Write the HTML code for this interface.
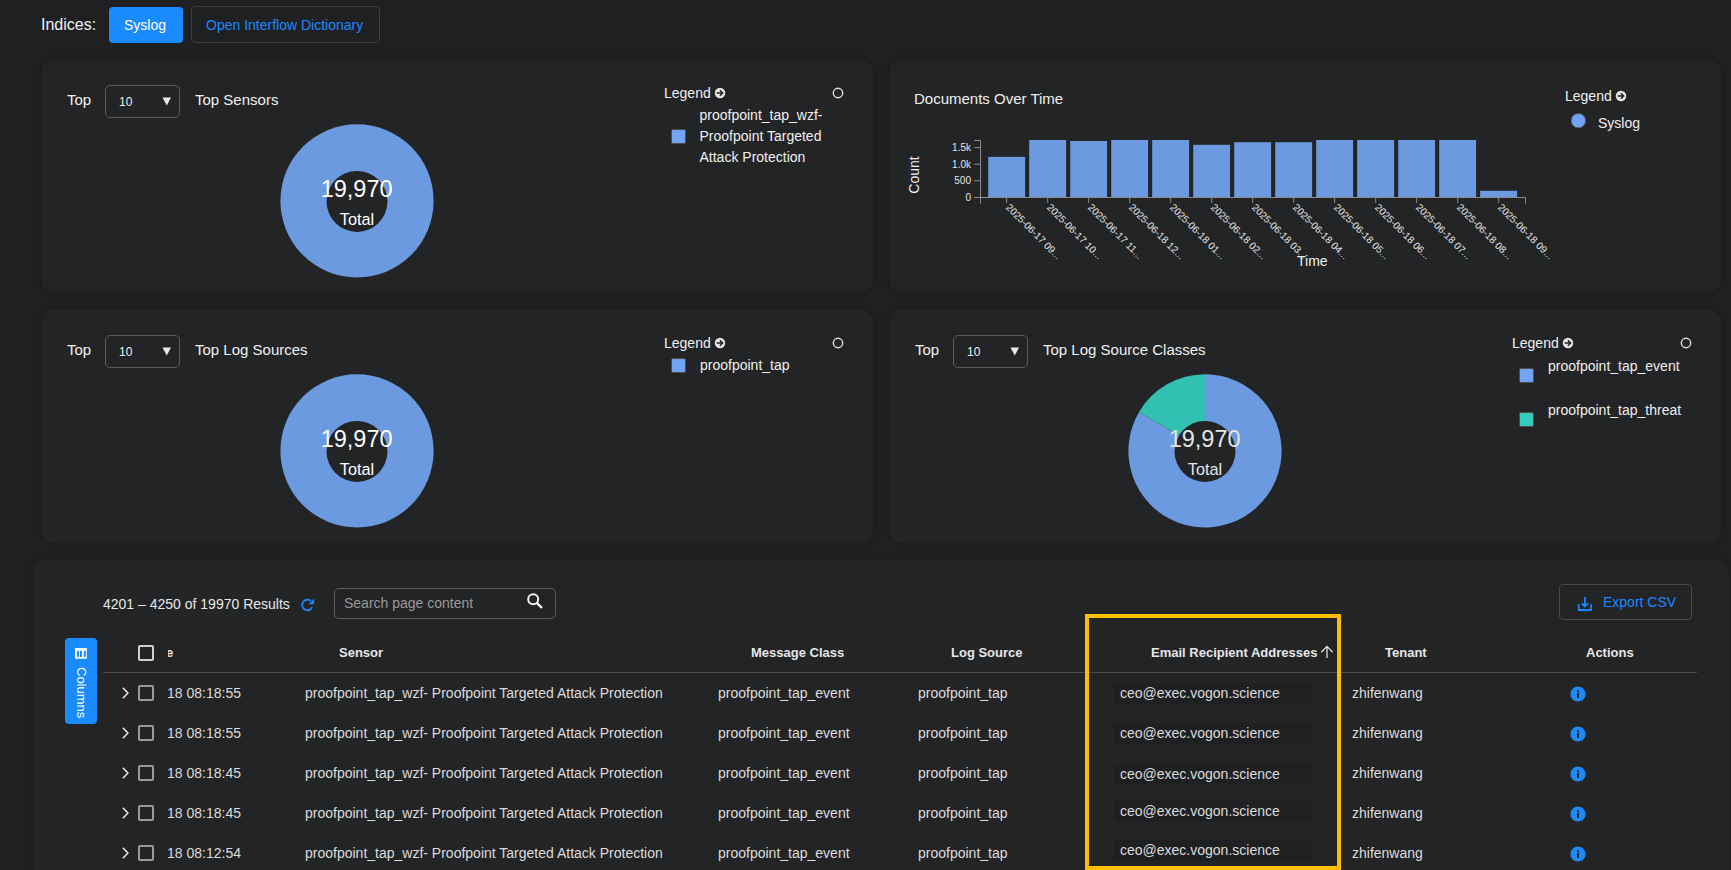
<!DOCTYPE html>
<html><head><meta charset="utf-8"><style>
html,body{margin:0;padding:0;}
body{width:1731px;height:870px;overflow:hidden;background:#1f2022;position:relative;font-family:"Liberation Sans", sans-serif;}
.t{position:absolute;white-space:nowrap;line-height:1;font-family:"Liberation Sans", sans-serif;}
svg text{font-family:"Liberation Sans",sans-serif;}
</style></head><body>
<div class="t" style="left:41px;top:17px;font-size:16px;color:#f0f0f0;">Indices:</div>
<div style="position:absolute;left:109px;top:7px;width:74px;height:36px;background:#1a8aff;border-radius:4px;"></div>
<div class="t" style="left:124px;top:18px;font-size:14px;color:#ffffff;">Syslog</div>
<div style="position:absolute;left:191px;top:6px;width:187px;height:35px;border:1px solid #3d3e41;border-radius:4px;"></div>
<div class="t" style="left:206px;top:18px;font-size:14px;color:#1a8aff;">Open Interflow Dictionary</div>
<div style="position:absolute;left:41px;top:59px;width:832px;height:234px;background:#232426;border-radius:14px;box-shadow:0 0 5px rgba(0,0,0,0.15);"></div>
<div style="position:absolute;left:889px;top:59px;width:832px;height:234px;background:#232426;border-radius:14px;box-shadow:0 0 5px rgba(0,0,0,0.15);"></div>
<div style="position:absolute;left:41px;top:309px;width:832px;height:234px;background:#232426;border-radius:14px;box-shadow:0 0 5px rgba(0,0,0,0.15);"></div>
<div style="position:absolute;left:889px;top:309px;width:832px;height:234px;background:#232426;border-radius:14px;box-shadow:0 0 5px rgba(0,0,0,0.15);"></div>
<div style="position:absolute;left:33px;top:559px;width:1696px;height:400px;background:#232426;border-radius:14px;box-shadow:0 0 5px rgba(0,0,0,0.15);"></div>
<div class="t" style="left:67px;top:92px;font-size:15px;color:#f0f0f0;">Top</div>
<div style="position:absolute;left:105px;top:85px;width:73px;height:31px;border:1px solid #5a5b5d;border-radius:5px;"></div>
<div class="t" style="left:119px;top:96px;font-size:12px;color:#f0f0f0;">10</div>
<svg style="position:absolute;left:162px;top:97px" width="10" height="10"><path d="M0.5 0.5 L9 0.5 L4.75 8.5 Z" fill="#e8e8e8"/></svg>
<div class="t" style="left:195px;top:92px;font-size:15px;color:#f0f0f0;">Top Sensors</div>
<svg style="position:absolute;left:277px;top:121px" width="160" height="160" viewBox="-80 -80 160 160"><circle cx="0" cy="-0.1" r="76.6" fill="#6b9ae1"/><circle cx="0" cy="0.4" r="30.5" fill="#232426"/></svg>
<div class="t" style="left:320.7px;top:178px;font-size:23.5px;color:#ffffff;width:70px;text-align:center;">19,970</div>
<div class="t" style="left:332px;top:211px;font-size:16.3px;color:#ffffff;width:50px;text-align:center;">Total</div>
<div class="t" style="left:664px;top:86px;font-size:14px;color:#f0f0f0;">Legend</div>
<svg style="position:absolute;left:713.8px;top:87.1px" width="12" height="12" viewBox="0 0 12 12"><circle cx="6" cy="6" r="5.25" fill="#e6e6e6"/><path d="M2.6 6 H8.6 M5.9 3.2 L8.7 6 L5.9 8.8" stroke="#232426" stroke-width="1.5" fill="none"/></svg>
<svg style="position:absolute;left:832px;top:87.1px" width="12" height="12" viewBox="0 0 12 12"><circle cx="6" cy="6" r="4.7" stroke="#e0e0e0" stroke-width="1.4" fill="none"/></svg>
<div style="position:absolute;left:671px;top:129px;width:13px;height:13px;background:#72a4f6;border:1px solid #4d4c48;border-radius:2px;"></div>
<div class="t" style="left:699.5px;top:104.5px;font-size:14px;line-height:21px;color:#f0f0f0;white-space:normal;width:135px">proofpoint_tap_wzf- Proofpoint Targeted Attack Protection</div>
<div class="t" style="left:67px;top:342px;font-size:15px;color:#f0f0f0;">Top</div>
<div style="position:absolute;left:105px;top:335px;width:73px;height:31px;border:1px solid #5a5b5d;border-radius:5px;"></div>
<div class="t" style="left:119px;top:346px;font-size:12px;color:#f0f0f0;">10</div>
<svg style="position:absolute;left:162px;top:347px" width="10" height="10"><path d="M0.5 0.5 L9 0.5 L4.75 8.5 Z" fill="#e8e8e8"/></svg>
<div class="t" style="left:195px;top:342px;font-size:15px;color:#f0f0f0;">Top Log Sources</div>
<svg style="position:absolute;left:277px;top:371px" width="160" height="160" viewBox="-80 -80 160 160"><circle cx="0" cy="-0.1" r="76.6" fill="#6b9ae1"/><circle cx="0" cy="0.4" r="30.5" fill="#232426"/></svg>
<div class="t" style="left:320.7px;top:428px;font-size:23.5px;color:#ffffff;width:70px;text-align:center;">19,970</div>
<div class="t" style="left:332px;top:461px;font-size:16.3px;color:#ffffff;width:50px;text-align:center;">Total</div>
<div class="t" style="left:664px;top:336px;font-size:14px;color:#f0f0f0;">Legend</div>
<svg style="position:absolute;left:713.8px;top:337.1px" width="12" height="12" viewBox="0 0 12 12"><circle cx="6" cy="6" r="5.25" fill="#e6e6e6"/><path d="M2.6 6 H8.6 M5.9 3.2 L8.7 6 L5.9 8.8" stroke="#232426" stroke-width="1.5" fill="none"/></svg>
<svg style="position:absolute;left:832px;top:337.1px" width="12" height="12" viewBox="0 0 12 12"><circle cx="6" cy="6" r="4.7" stroke="#e0e0e0" stroke-width="1.4" fill="none"/></svg>
<div style="position:absolute;left:671px;top:358px;width:13px;height:13px;background:#72a4f6;border:1px solid #4d4c48;border-radius:2px;"></div>
<div class="t" style="left:700px;top:358px;font-size:14px;color:#f0f0f0;">proofpoint_tap</div>
<div class="t" style="left:915px;top:342px;font-size:15px;color:#f0f0f0;">Top</div>
<div style="position:absolute;left:953px;top:335px;width:73px;height:31px;border:1px solid #5a5b5d;border-radius:5px;"></div>
<div class="t" style="left:967px;top:346px;font-size:12px;color:#f0f0f0;">10</div>
<svg style="position:absolute;left:1010px;top:347px" width="10" height="10"><path d="M0.5 0.5 L9 0.5 L4.75 8.5 Z" fill="#e8e8e8"/></svg>
<div class="t" style="left:1043px;top:342px;font-size:15px;color:#f0f0f0;">Top Log Source Classes</div>
<svg style="position:absolute;left:1125px;top:371px" width="160" height="160" viewBox="-80 -80 160 160"><path d="M0 -0.1 L0.00 -76.70 A76.6 76.6 0 1 1 -65.93 -39.09 Z" fill="#6b9ae1"/><path d="M0 -0.1 L-65.93 -39.09 A76.6 76.6 0 0 1 -0.00 -76.70 Z" fill="#31c0b1"/><circle cx="0" cy="0.4" r="30.5" fill="#232426"/></svg>
<div class="t" style="left:1168.7px;top:428px;font-size:23.5px;color:#e4e4e4;width:70px;text-align:center;">19,970</div>
<div class="t" style="left:1180px;top:461px;font-size:16.3px;color:#e4e4e4;width:50px;text-align:center;">Total</div>
<div class="t" style="left:1512px;top:336px;font-size:14px;color:#f0f0f0;">Legend</div>
<svg style="position:absolute;left:1561.8px;top:337.1px" width="12" height="12" viewBox="0 0 12 12"><circle cx="6" cy="6" r="5.25" fill="#e6e6e6"/><path d="M2.6 6 H8.6 M5.9 3.2 L8.7 6 L5.9 8.8" stroke="#232426" stroke-width="1.5" fill="none"/></svg>
<svg style="position:absolute;left:1680px;top:337.1px" width="12" height="12" viewBox="0 0 12 12"><circle cx="6" cy="6" r="4.7" stroke="#e0e0e0" stroke-width="1.4" fill="none"/></svg>
<div style="position:absolute;left:1519px;top:368px;width:13px;height:13px;background:#72a4f6;border:1px solid #4d4c48;border-radius:2px;"></div>
<div class="t" style="left:1548px;top:359px;font-size:14px;color:#f0f0f0;">proofpoint_tap_event</div>
<div style="position:absolute;left:1519px;top:412px;width:13px;height:13px;background:#33cdbd;border:1px solid #4d4c48;border-radius:2px;"></div>
<div class="t" style="left:1548px;top:403px;font-size:14px;color:#f0f0f0;">proofpoint_tap_threat</div>
<div class="t" style="left:914px;top:91px;font-size:15px;color:#f0f0f0;">Documents Over Time</div>
<div class="t" style="left:1565px;top:89px;font-size:14px;color:#f0f0f0;">Legend</div>
<svg style="position:absolute;left:1614.8px;top:90.1px" width="12" height="12" viewBox="0 0 12 12"><circle cx="6" cy="6" r="5.25" fill="#e6e6e6"/><path d="M2.6 6 H8.6 M5.9 3.2 L8.7 6 L5.9 8.8" stroke="#232426" stroke-width="1.5" fill="none"/></svg>
<svg style="position:absolute;left:1570px;top:113px" width="16" height="16"><circle cx="8.4" cy="7.7" r="7.2" fill="#72a4f6" stroke="#55565a" stroke-width="1"/></svg>
<div class="t" style="left:1598px;top:116px;font-size:14px;color:#f0f0f0;">Syslog</div>
<svg style="position:absolute;left:0;top:0" width="1731" height="300"><rect x="988.2" y="156.9" width="36.9" height="40.6" fill="#6b9ae1"/><rect x="1029.2" y="140" width="36.9" height="57.5" fill="#6b9ae1"/><rect x="1070.2" y="141" width="36.9" height="56.5" fill="#6b9ae1"/><rect x="1111.2" y="140" width="36.9" height="57.5" fill="#6b9ae1"/><rect x="1152.2" y="140" width="36.9" height="57.5" fill="#6b9ae1"/><rect x="1193.2" y="144.8" width="36.9" height="52.7" fill="#6b9ae1"/><rect x="1234.2" y="142.2" width="36.9" height="55.3" fill="#6b9ae1"/><rect x="1275.2" y="142.2" width="36.9" height="55.3" fill="#6b9ae1"/><rect x="1316.2" y="140" width="36.9" height="57.5" fill="#6b9ae1"/><rect x="1357.2" y="140" width="36.9" height="57.5" fill="#6b9ae1"/><rect x="1398.2" y="140" width="36.9" height="57.5" fill="#6b9ae1"/><rect x="1439.2" y="140" width="36.9" height="57.5" fill="#6b9ae1"/><rect x="1480.2" y="190.8" width="36.9" height="6.7" fill="#6b9ae1"/><path d="M974 140.5 H980.5 V197.5 H974 M980.5 203.5 V197.5 H1525.5 V203.5" stroke="#8c8c8c" stroke-width="1" fill="none"/><path d="M974 180.8 H980" stroke="#8c8c8c" stroke-width="1"/><path d="M974 164.2 H980" stroke="#8c8c8c" stroke-width="1"/><path d="M974 147.6 H980" stroke="#8c8c8c" stroke-width="1"/><text x="971" y="201.0" font-size="10" fill="#e6e6e6" text-anchor="end" font-family='"Liberation Sans"'>0</text><text x="971" y="184.3" font-size="10" fill="#e6e6e6" text-anchor="end" font-family='"Liberation Sans"'>500</text><text x="971" y="167.7" font-size="10" fill="#e6e6e6" text-anchor="end" font-family='"Liberation Sans"'>1.0k</text><text x="971" y="151.1" font-size="10" fill="#e6e6e6" text-anchor="end" font-family='"Liberation Sans"'>1.5k</text><path d="M1006.7 197.5 V203" stroke="#8c8c8c"/><text transform="translate(1006.7,203) rotate(45)" x="2.5" y="4.6" font-size="10" fill="#e6e6e6" font-family='"Liberation Sans"'>2025-06-17 09...</text><path d="M1047.7 197.5 V203" stroke="#8c8c8c"/><text transform="translate(1047.7,203) rotate(45)" x="2.5" y="4.6" font-size="10" fill="#e6e6e6" font-family='"Liberation Sans"'>2025-06-17 10...</text><path d="M1088.7 197.5 V203" stroke="#8c8c8c"/><text transform="translate(1088.7,203) rotate(45)" x="2.5" y="4.6" font-size="10" fill="#e6e6e6" font-family='"Liberation Sans"'>2025-06-17 11...</text><path d="M1129.7 197.5 V203" stroke="#8c8c8c"/><text transform="translate(1129.7,203) rotate(45)" x="2.5" y="4.6" font-size="10" fill="#e6e6e6" font-family='"Liberation Sans"'>2025-06-18 12...</text><path d="M1170.7 197.5 V203" stroke="#8c8c8c"/><text transform="translate(1170.7,203) rotate(45)" x="2.5" y="4.6" font-size="10" fill="#e6e6e6" font-family='"Liberation Sans"'>2025-06-18 01...</text><path d="M1211.7 197.5 V203" stroke="#8c8c8c"/><text transform="translate(1211.7,203) rotate(45)" x="2.5" y="4.6" font-size="10" fill="#e6e6e6" font-family='"Liberation Sans"'>2025-06-18 02...</text><path d="M1252.7 197.5 V203" stroke="#8c8c8c"/><text transform="translate(1252.7,203) rotate(45)" x="2.5" y="4.6" font-size="10" fill="#e6e6e6" font-family='"Liberation Sans"'>2025-06-18 03...</text><path d="M1293.7 197.5 V203" stroke="#8c8c8c"/><text transform="translate(1293.7,203) rotate(45)" x="2.5" y="4.6" font-size="10" fill="#e6e6e6" font-family='"Liberation Sans"'>2025-06-18 04...</text><path d="M1334.7 197.5 V203" stroke="#8c8c8c"/><text transform="translate(1334.7,203) rotate(45)" x="2.5" y="4.6" font-size="10" fill="#e6e6e6" font-family='"Liberation Sans"'>2025-06-18 05...</text><path d="M1375.7 197.5 V203" stroke="#8c8c8c"/><text transform="translate(1375.7,203) rotate(45)" x="2.5" y="4.6" font-size="10" fill="#e6e6e6" font-family='"Liberation Sans"'>2025-06-18 06...</text><path d="M1416.7 197.5 V203" stroke="#8c8c8c"/><text transform="translate(1416.7,203) rotate(45)" x="2.5" y="4.6" font-size="10" fill="#e6e6e6" font-family='"Liberation Sans"'>2025-06-18 07...</text><path d="M1457.7 197.5 V203" stroke="#8c8c8c"/><text transform="translate(1457.7,203) rotate(45)" x="2.5" y="4.6" font-size="10" fill="#e6e6e6" font-family='"Liberation Sans"'>2025-06-18 08...</text><path d="M1498.7 197.5 V203" stroke="#8c8c8c"/><text transform="translate(1498.7,203) rotate(45)" x="2.5" y="4.6" font-size="10" fill="#e6e6e6" font-family='"Liberation Sans"'>2025-06-18 09...</text><text transform="translate(919,175) rotate(-90)" x="0" y="0" font-size="14" fill="#f0f0f0" text-anchor="middle" font-family='"Liberation Sans"'>Count</text><text x="1297" y="266" font-size="14" fill="#f0f0f0" font-family='"Liberation Sans"'>Time</text></svg>
<div class="t" style="left:103px;top:597px;font-size:14px;color:#e8e8e8;">4201 – 4250 of 19970 Results</div>
<svg style="position:absolute;left:300px;top:598px" width="16" height="15" viewBox="0 0 16 15"><path d="M12.3 9.24 A5.3 5.3 0 1 1 10.9 2.94" stroke="#1a8aff" stroke-width="1.8" fill="none"/><path d="M14.1 0.8 L14.1 5.9 L8.2 6.6 Z" fill="#1a8aff"/></svg>
<div style="position:absolute;left:334px;top:588px;width:220px;height:29px;border:1px solid #5a5b5d;border-radius:5px;"></div>
<div class="t" style="left:344px;top:596px;font-size:14px;color:#9a9a9a;">Search page content</div>
<svg style="position:absolute;left:526px;top:592px" width="18" height="18" viewBox="0 0 18 18"><circle cx="7.2" cy="7.2" r="5" stroke="#f0f0f0" stroke-width="2" fill="none"/><path d="M10.8 10.8 L16 16" stroke="#f0f0f0" stroke-width="2.4"/></svg>
<div style="position:absolute;left:1559px;top:584px;width:131px;height:34px;border:1px solid #48494c;border-radius:4px;"></div>
<svg style="position:absolute;left:1577px;top:596px" width="16" height="16" viewBox="0 0 16 16"><path d="M1.7 8.2 V14 H14 V8.2" stroke="#1a8aff" stroke-width="1.8" fill="none"/><path d="M7.85 0.9 V10.6 M4.6 7.4 L7.85 10.6 L11.1 7.4" stroke="#1a8aff" stroke-width="1.8" fill="none"/></svg>
<div class="t" style="left:1603px;top:595px;font-size:14px;color:#1a8aff;">Export CSV</div>
<div style="position:absolute;left:65px;top:638px;width:32px;height:86px;background:#1a8aff;border-radius:4px;"></div>
<svg style="position:absolute;left:75px;top:648px" width="12" height="11" viewBox="0 0 12 11"><rect x="0" y="0" width="11.8" height="10.8" fill="#fff"/><rect x="1.9" y="2.9" width="2" height="6" fill="#1a8aff"/><rect x="5" y="2.9" width="2" height="6" fill="#1a8aff"/><rect x="8.8" y="2.9" width="2" height="6" fill="#1a8aff"/></svg>
<div class="t" style="left:68px;top:668px;width:26px;height:50px;"><div style="position:absolute;left:0;top:0;font-size:13px;color:#fff;transform-origin:0 0;transform:translate(20px,-1px) rotate(90deg);">Columns</div></div>
<div style="position:absolute;left:138px;top:645px;width:12px;height:12px;border:2px solid #d0d0d0;border-radius:2px;"></div>
<div style="position:absolute;left:167.5px;top:640px;width:10px;height:22px;overflow:hidden"><div class="t" style="left:-1.5px;top:6px;font-size:13px;color:#e6e6e6;font-weight:bold">e</div></div>
<div class="t" style="left:339px;top:646px;font-size:13px;color:#e6e6e6;font-weight:bold;">Sensor</div>
<div class="t" style="left:751px;top:646px;font-size:13px;color:#e6e6e6;font-weight:bold;">Message Class</div>
<div class="t" style="left:951px;top:646px;font-size:13px;color:#e6e6e6;font-weight:bold;">Log Source</div>
<div class="t" style="left:1151px;top:646px;font-size:13px;color:#e6e6e6;font-weight:bold;">Email Recipient Addresses</div>
<svg style="position:absolute;left:1320px;top:645px" width="14" height="14" viewBox="0 0 14 14"><path d="M7 13.1 V1.4 M1.3 7.2 L7 1.4 L12.7 7.2" stroke="#e6e6e6" stroke-width="1.25" fill="none"/></svg>
<div class="t" style="left:1385px;top:646px;font-size:13px;color:#e6e6e6;font-weight:bold;">Tenant</div>
<div class="t" style="left:1586px;top:646px;font-size:13px;color:#e6e6e6;font-weight:bold;">Actions</div>
<div style="position:absolute;left:103px;top:672px;width:1594px;height:1px;background:#4a4b4e;"></div>
<svg style="position:absolute;left:120px;top:687px" width="10" height="12" viewBox="0 0 10 12"><path d="M2.9 0.7 L7.9 6 L2.9 11.3" stroke="#e0e0e0" stroke-width="1.6" fill="none"/></svg>
<div style="position:absolute;left:138px;top:685px;width:12px;height:12px;border:2px solid #9a9a9a;border-radius:2px;"></div>
<div class="t" style="left:167px;top:686px;font-size:14px;color:#dcdcdc;">18 08:18:55</div>
<div class="t" style="left:305px;top:686px;font-size:14px;color:#dcdcdc;">proofpoint_tap_wzf- Proofpoint Targeted Attack Protection</div>
<div class="t" style="left:718px;top:686px;font-size:14px;color:#dcdcdc;">proofpoint_tap_event</div>
<div class="t" style="left:918px;top:686px;font-size:14px;color:#dcdcdc;">proofpoint_tap</div>
<div style="position:absolute;left:1114px;top:683px;width:197px;height:21px;background:#1f2022;"></div>
<div class="t" style="left:1120px;top:686px;font-size:14px;color:#dcdcdc;">ceo@exec.vogon.science</div>
<div class="t" style="left:1352px;top:686px;font-size:14px;color:#dcdcdc;">zhifenwang</div>
<svg style="position:absolute;left:1570px;top:685.9px" width="16" height="16" viewBox="0 0 16 16"><circle cx="8" cy="8" r="7.6" fill="#1a8aff"/><rect x="7" y="4.1" width="2" height="1.9" fill="#232426"/><rect x="7" y="7.1" width="2" height="4.9" fill="#232426"/></svg>
<svg style="position:absolute;left:120px;top:727px" width="10" height="12" viewBox="0 0 10 12"><path d="M2.9 0.7 L7.9 6 L2.9 11.3" stroke="#e0e0e0" stroke-width="1.6" fill="none"/></svg>
<div style="position:absolute;left:138px;top:725px;width:12px;height:12px;border:2px solid #9a9a9a;border-radius:2px;"></div>
<div class="t" style="left:167px;top:726px;font-size:14px;color:#dcdcdc;">18 08:18:55</div>
<div class="t" style="left:305px;top:726px;font-size:14px;color:#dcdcdc;">proofpoint_tap_wzf- Proofpoint Targeted Attack Protection</div>
<div class="t" style="left:718px;top:726px;font-size:14px;color:#dcdcdc;">proofpoint_tap_event</div>
<div class="t" style="left:918px;top:726px;font-size:14px;color:#dcdcdc;">proofpoint_tap</div>
<div style="position:absolute;left:1114px;top:723px;width:197px;height:21px;background:#1f2022;"></div>
<div class="t" style="left:1120px;top:726px;font-size:14px;color:#dcdcdc;">ceo@exec.vogon.science</div>
<div class="t" style="left:1352px;top:726px;font-size:14px;color:#dcdcdc;">zhifenwang</div>
<svg style="position:absolute;left:1570px;top:725.9px" width="16" height="16" viewBox="0 0 16 16"><circle cx="8" cy="8" r="7.6" fill="#1a8aff"/><rect x="7" y="4.1" width="2" height="1.9" fill="#232426"/><rect x="7" y="7.1" width="2" height="4.9" fill="#232426"/></svg>
<svg style="position:absolute;left:120px;top:767px" width="10" height="12" viewBox="0 0 10 12"><path d="M2.9 0.7 L7.9 6 L2.9 11.3" stroke="#e0e0e0" stroke-width="1.6" fill="none"/></svg>
<div style="position:absolute;left:138px;top:765px;width:12px;height:12px;border:2px solid #9a9a9a;border-radius:2px;"></div>
<div class="t" style="left:167px;top:766px;font-size:14px;color:#dcdcdc;">18 08:18:45</div>
<div class="t" style="left:305px;top:766px;font-size:14px;color:#dcdcdc;">proofpoint_tap_wzf- Proofpoint Targeted Attack Protection</div>
<div class="t" style="left:718px;top:766px;font-size:14px;color:#dcdcdc;">proofpoint_tap_event</div>
<div class="t" style="left:918px;top:766px;font-size:14px;color:#dcdcdc;">proofpoint_tap</div>
<div style="position:absolute;left:1114px;top:764px;width:197px;height:21px;background:#1f2022;"></div>
<div class="t" style="left:1120px;top:767px;font-size:14px;color:#dcdcdc;">ceo@exec.vogon.science</div>
<div class="t" style="left:1352px;top:766px;font-size:14px;color:#dcdcdc;">zhifenwang</div>
<svg style="position:absolute;left:1570px;top:765.9px" width="16" height="16" viewBox="0 0 16 16"><circle cx="8" cy="8" r="7.6" fill="#1a8aff"/><rect x="7" y="4.1" width="2" height="1.9" fill="#232426"/><rect x="7" y="7.1" width="2" height="4.9" fill="#232426"/></svg>
<svg style="position:absolute;left:120px;top:807px" width="10" height="12" viewBox="0 0 10 12"><path d="M2.9 0.7 L7.9 6 L2.9 11.3" stroke="#e0e0e0" stroke-width="1.6" fill="none"/></svg>
<div style="position:absolute;left:138px;top:805px;width:12px;height:12px;border:2px solid #9a9a9a;border-radius:2px;"></div>
<div class="t" style="left:167px;top:806px;font-size:14px;color:#dcdcdc;">18 08:18:45</div>
<div class="t" style="left:305px;top:806px;font-size:14px;color:#dcdcdc;">proofpoint_tap_wzf- Proofpoint Targeted Attack Protection</div>
<div class="t" style="left:718px;top:806px;font-size:14px;color:#dcdcdc;">proofpoint_tap_event</div>
<div class="t" style="left:918px;top:806px;font-size:14px;color:#dcdcdc;">proofpoint_tap</div>
<div style="position:absolute;left:1114px;top:801px;width:197px;height:21px;background:#1f2022;"></div>
<div class="t" style="left:1120px;top:804px;font-size:14px;color:#dcdcdc;">ceo@exec.vogon.science</div>
<div class="t" style="left:1352px;top:806px;font-size:14px;color:#dcdcdc;">zhifenwang</div>
<svg style="position:absolute;left:1570px;top:805.9px" width="16" height="16" viewBox="0 0 16 16"><circle cx="8" cy="8" r="7.6" fill="#1a8aff"/><rect x="7" y="4.1" width="2" height="1.9" fill="#232426"/><rect x="7" y="7.1" width="2" height="4.9" fill="#232426"/></svg>
<svg style="position:absolute;left:120px;top:847px" width="10" height="12" viewBox="0 0 10 12"><path d="M2.9 0.7 L7.9 6 L2.9 11.3" stroke="#e0e0e0" stroke-width="1.6" fill="none"/></svg>
<div style="position:absolute;left:138px;top:845px;width:12px;height:12px;border:2px solid #9a9a9a;border-radius:2px;"></div>
<div class="t" style="left:167px;top:846px;font-size:14px;color:#dcdcdc;">18 08:12:54</div>
<div class="t" style="left:305px;top:846px;font-size:14px;color:#dcdcdc;">proofpoint_tap_wzf- Proofpoint Targeted Attack Protection</div>
<div class="t" style="left:718px;top:846px;font-size:14px;color:#dcdcdc;">proofpoint_tap_event</div>
<div class="t" style="left:918px;top:846px;font-size:14px;color:#dcdcdc;">proofpoint_tap</div>
<div style="position:absolute;left:1114px;top:840px;width:197px;height:21px;background:#1f2022;"></div>
<div class="t" style="left:1120px;top:843px;font-size:14px;color:#dcdcdc;">ceo@exec.vogon.science</div>
<div class="t" style="left:1352px;top:846px;font-size:14px;color:#dcdcdc;">zhifenwang</div>
<svg style="position:absolute;left:1570px;top:845.9px" width="16" height="16" viewBox="0 0 16 16"><circle cx="8" cy="8" r="7.6" fill="#1a8aff"/><rect x="7" y="4.1" width="2" height="1.9" fill="#232426"/><rect x="7" y="7.1" width="2" height="4.9" fill="#232426"/></svg>
<div style="position:absolute;left:1085px;top:614px;width:248px;height:248px;border:4px solid #fdbe00;box-sizing:content-box;"></div>
</body></html>
